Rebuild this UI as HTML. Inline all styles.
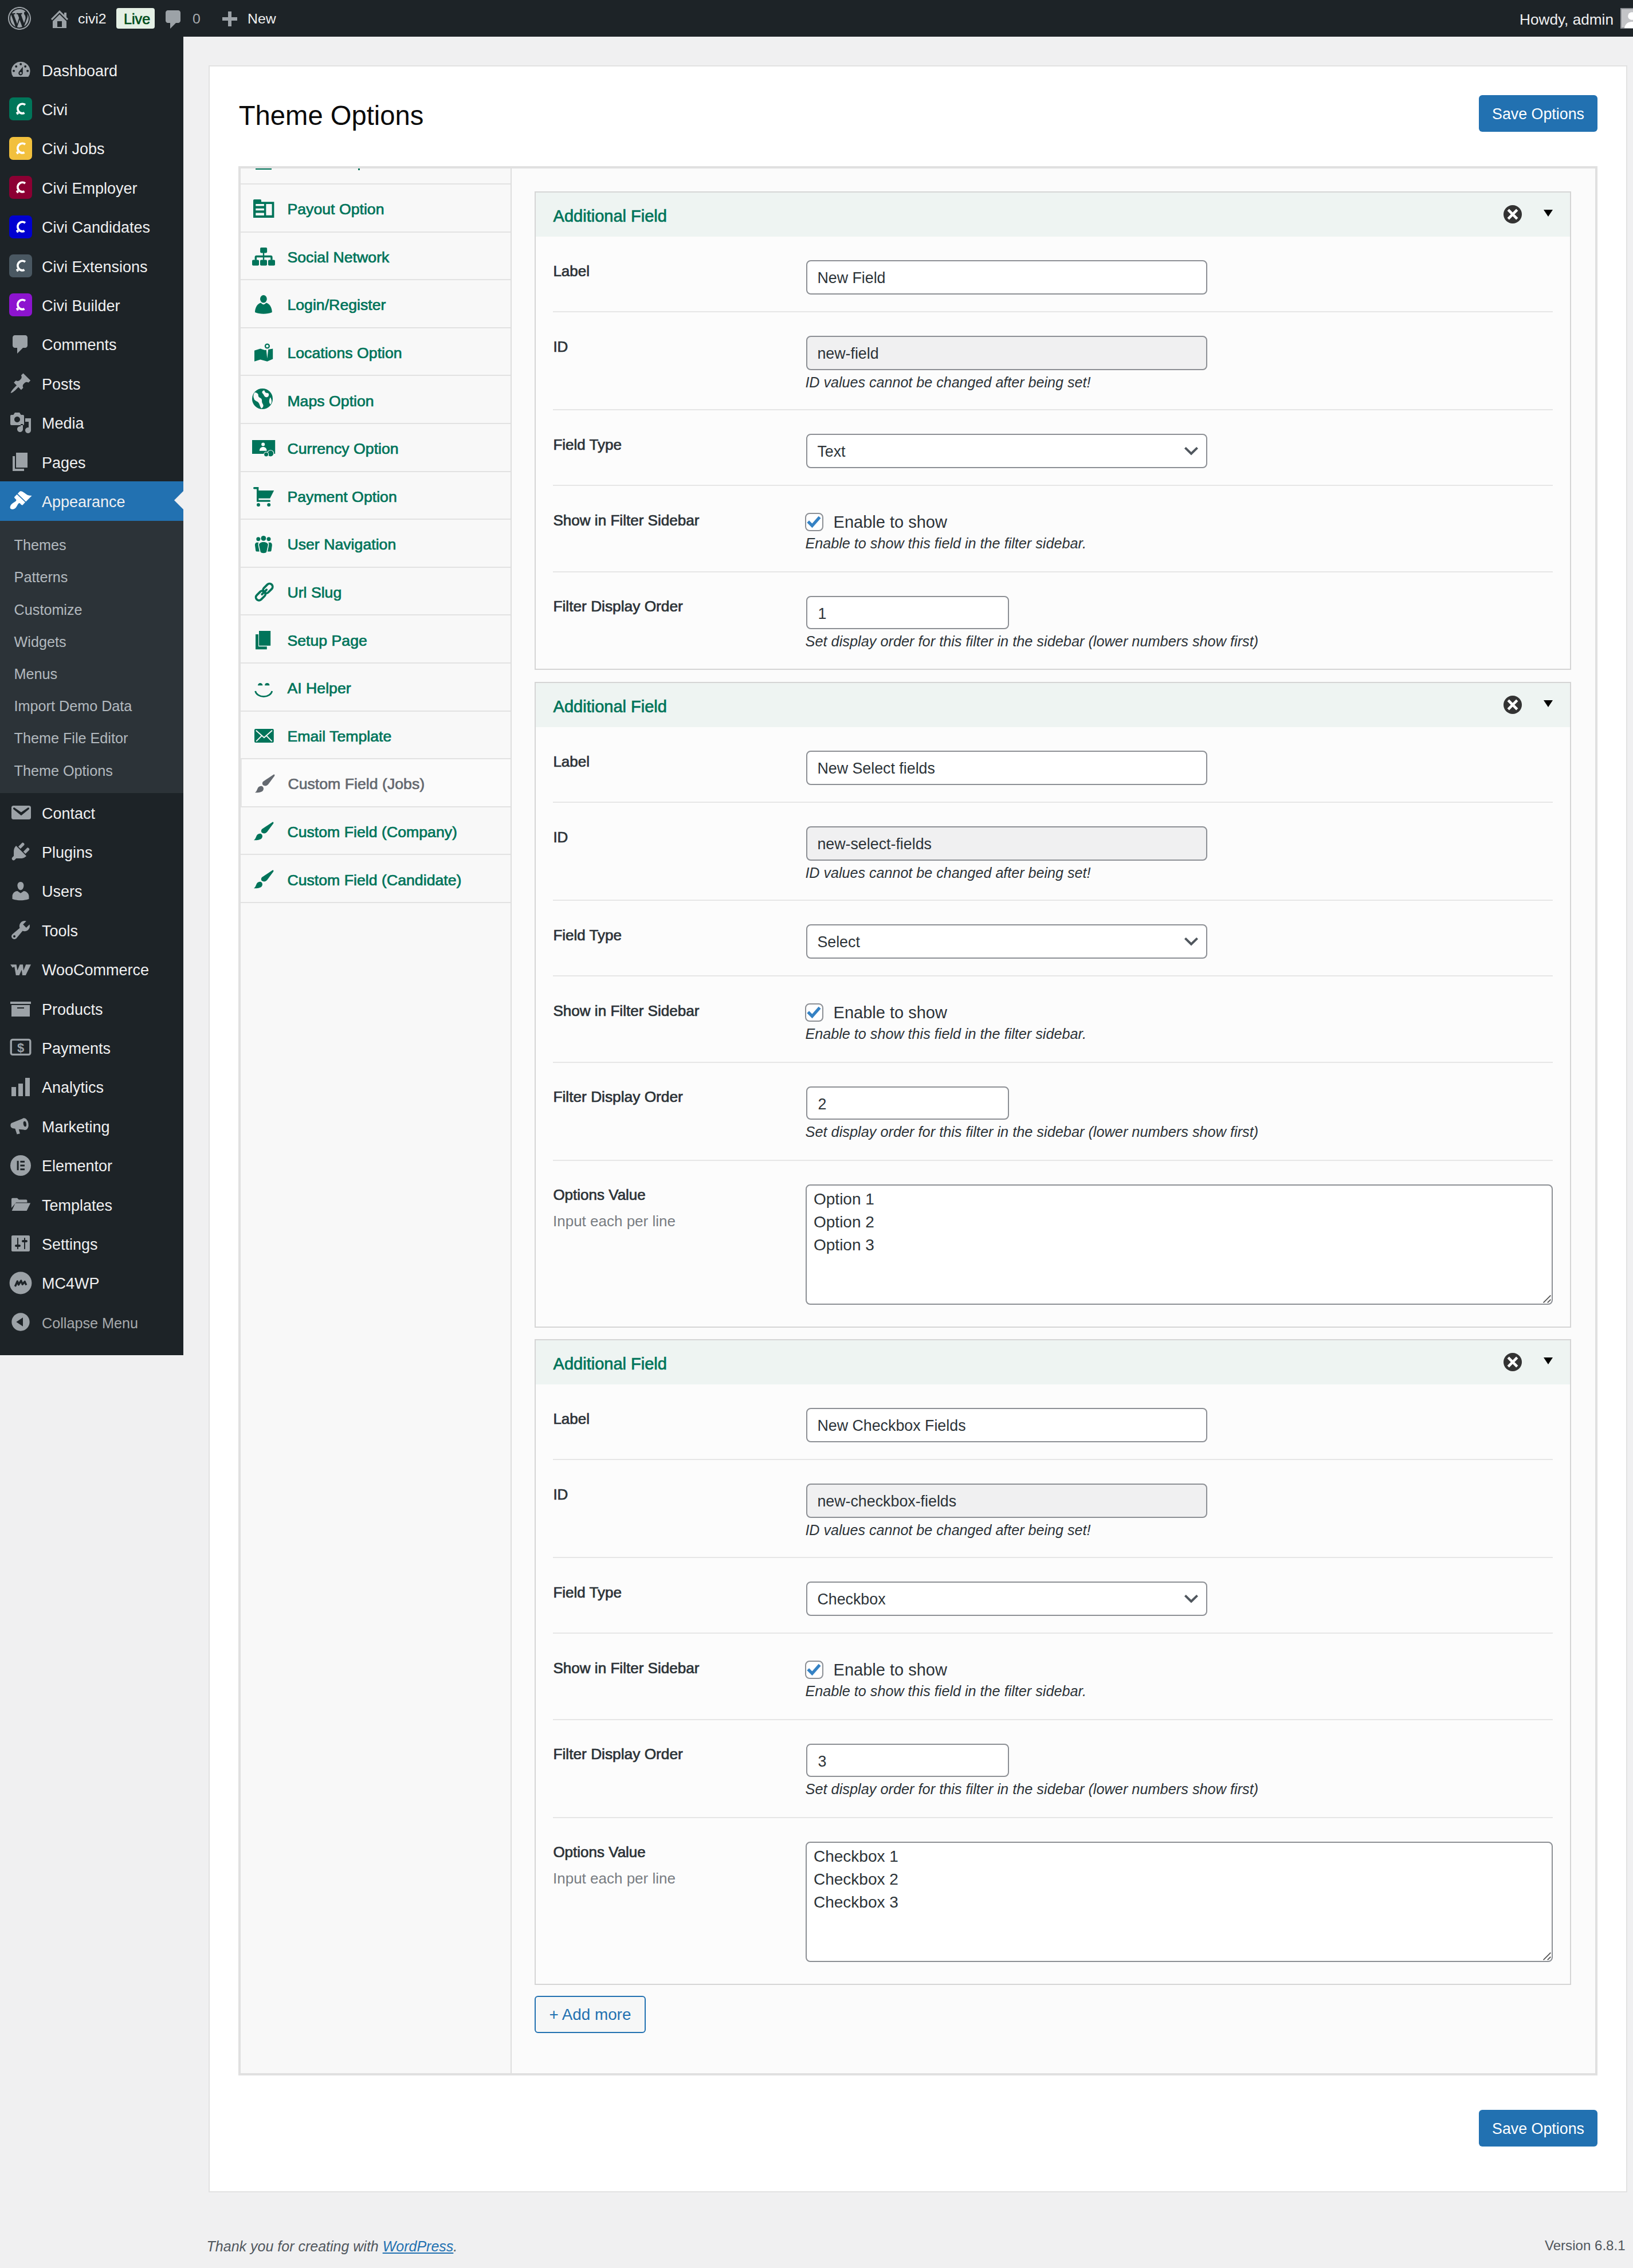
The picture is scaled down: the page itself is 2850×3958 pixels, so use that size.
<!DOCTYPE html>
<html><head><meta charset="utf-8"><style>
*{box-sizing:border-box}
html,body{margin:0;padding:0}
body{width:2850px;height:3958px;overflow:hidden;background:#f0f0f1;font-family:"Liberation Sans",sans-serif}
#pg{zoom:2;position:relative;width:1425px;height:1979px;overflow:hidden;background:#f0f0f1}
.ab{position:absolute}
.tx{position:absolute;white-space:nowrap}
#am{position:absolute;left:0;top:32px;width:160px;height:1150.6px}
#am .mi{position:absolute;left:0;width:160px;height:34.2px}
#am .mi .nm{position:absolute;left:36.5px;top:.8px;line-height:34.2px;font-size:13.5px;color:#f0f0f1;white-space:nowrap}
#am .mi.col .nm{color:#a7aaad;font-size:12.6px}
#am .mi svg{position:absolute;left:8px;top:7px;width:20px;height:20px}
#am .sub{position:absolute;left:0;top:422.4px;width:160px;height:237.6px;background:#2c3338}
#am .sub div{position:absolute;left:12.3px;font-size:12.6px;line-height:28px;color:rgba(240,246,252,.7);white-space:nowrap}
#am .arr{position:absolute;right:0;top:8.5px;width:0;height:0;border:8px solid transparent;border-right-color:#f0f0f1}
</style></head><body><div id="pg">
<div class="ab" style="left:0.00px;top:0.00px;width:1425.00px;height:32.00px;background:#1d2327"></div>
<svg class="ab" style="left:7px;top:6px;width:20px;height:20px" viewBox="0 0 20 20"><path d="M20 10c0-5.52-4.48-10-10-10S0 4.48 0 10s4.48 10 10 10 10-4.48 10-10zM10 1.01c4.97 0 8.99 4.02 8.99 8.99s-4.02 8.99-8.99 8.99S1.01 14.97 1.01 10 5.03 1.01 10 1.01zM8.01 14.82L4.96 6.61c.49-.03 1.05-.08 1.05-.08.43-.05.38-1.01-.06-.99 0 0-1.29.1-2.13.1-.15 0-.33 0-.52-.01 1.44-2.17 3.9-3.6 6.7-3.6 2.09 0 3.99.79 5.41 2.09-.6-.08-1.45.35-1.45 1.42 0 .66.38 1.22.79 1.88.31.54.5 1.22.5 2.21 0 1.34-1.27 4.48-1.27 4.48l-2.71-7.5c.48-.03.75-.16.75-.16.43-.05.38-1.1-.05-1.08 0 0-1.3.11-2.14.11-.78 0-2.11-.11-2.11-.11-.43-.02-.48 1.06-.05 1.08l.84.08 1.12 3.04zm6.02 2.15L16.64 10s.67-1.69.39-3.81c.63 1.14.94 2.42.94 3.81 0 2.96-1.56 5.58-3.94 6.97zM2.68 6.77L6.5 17.25c-2.67-1.3-4.47-4.08-4.47-7.25 0-1.16.2-2.23.65-3.23zm7.45 4.53l2.29 6.25c-.75.27-1.57.42-2.42.42-.72 0-1.41-.11-2.06-.32z" fill="#9ca2a7"/></svg>
<svg class="ab" style="left:42px;top:6.5px;width:20px;height:20px" viewBox="0 0 20 20"><path d="M16 8.5l1.53 1.53-1.06 1.06L10 4.62l-6.47 6.47-1.06-1.06L10 2.5l4 4v-2h2v4zm-6-2.46l6 5.99V18H4v-5.97zM12 17v-5H8v5h4z" fill="#9ca2a7"/></svg>
<div class="tx" style="left:68.00px;top:8.70px;font-size:12.4px;line-height:16px;color:#f0f0f1;font-weight:400;font-style:normal;">civi2</div>
<div class="ab" style="left:101.50px;top:7.00px;width:33.50px;height:18.00px;background:#e5f0e5;border-radius:2px"></div>
<div class="tx" style="left:108.00px;top:8.63px;font-size:12.6px;line-height:16px;color:#004d1a;font-weight:400;font-style:normal;-webkit-text-stroke:0.36px #004d1a;">Live</div>
<svg class="ab" style="left:141.7px;top:7px;width:20px;height:20px" viewBox="0 0 20 20"><path d="M5 2h9c1.1 0 2 .9 2 2v7c0 1.1-.9 2-2 2h-2l-5 5v-5H5c-1.1 0-2-.9-2-2V4c0-1.1.9-2 2-2z" fill="#9ca2a7"/></svg>
<div class="tx" style="left:168.00px;top:8.70px;font-size:12.4px;line-height:16px;color:#a7aaad;font-weight:400;font-style:normal;">0</div>
<svg class="ab" style="left:190px;top:8px;width:20px;height:20px" viewBox="0 0 20 20"><path d="M17 7v3h-5v5H9v-5H4V7h5V2h3v5h5z" fill="#9ca2a7"/></svg>
<div class="tx" style="left:216.00px;top:8.70px;font-size:12.4px;line-height:16px;color:#f0f0f1;font-weight:400;font-style:normal;">New</div>
<div class="tx" style="left:1326.00px;top:8.36px;font-size:13.1px;line-height:17px;color:#f0f0f1;font-weight:400;font-style:normal;">Howdy, admin</div>
<svg class="ab" style="left:1414px;top:7px;width:18px;height:18px" viewBox="0 0 18 18"><rect x=".5" y=".5" width="17" height="17" fill="#c3c4c7" stroke="#8c8f94"/><circle cx="10" cy="7" r="3.4" fill="#fff"/><path d="M3.5 17.5c.6-3.6 3.2-5.5 6.5-5.5s5.9 1.9 6.5 5.5z" fill="#fff"/></svg>
<div class="ab" style="left:0.00px;top:32.00px;width:160.00px;height:1150.60px;background:#1d2327"></div>
<div id="am"><div class="mi" style="top:12.0px"><svg viewBox="0 0 20 20"><path d="M3.5 16A8.2 8.2 0 1 1 16.7 16Z" fill="#9ca2a7"/><circle cx="10.1" cy="5" r="1" fill="#1d2327"/><circle cx="6.1" cy="7" r="1" fill="#1d2327"/><circle cx="14.1" cy="7" r="1" fill="#1d2327"/><circle cx="4" cy="10.9" r="1" fill="#1d2327"/><circle cx="16.1" cy="10.9" r="1" fill="#1d2327"/><path d="M11.9 7.2V12.9A1.9 1.9 0 1 1 8.4 11.8Z" fill="#1d2327"/><circle cx="10.1" cy="12.8" r=".9" fill="#9ca2a7"/></svg><div class="nm">Dashboard</div></div>
<div class="mi" style="top:46.2px"><svg viewBox="0 0 20 20"><rect x="0" y="0" width="20" height="20" rx="3.5" fill="#00765a"/><path d="M14 6.5A4.1 4.1 0 1 0 13.3 13.5" stroke="#fff" stroke-width="1.95" fill="none"/><path d="M5.9 13.2L7.3 12.4 8.6 14.3 7 15.2Z" fill="#fff"/></svg><div class="nm">Civi</div></div>
<div class="mi" style="top:80.4px"><svg viewBox="0 0 20 20"><rect x="0" y="0" width="20" height="20" rx="3.5" fill="#f2c03d"/><path d="M14 6.5A4.1 4.1 0 1 0 13.3 13.5" stroke="#fff" stroke-width="1.95" fill="none"/><path d="M5.9 13.2L7.3 12.4 8.6 14.3 7 15.2Z" fill="#fff"/></svg><div class="nm">Civi Jobs</div></div>
<div class="mi" style="top:114.6px"><svg viewBox="0 0 20 20"><rect x="0" y="0" width="20" height="20" rx="3.5" fill="#8c0033"/><path d="M14 6.5A4.1 4.1 0 1 0 13.3 13.5" stroke="#fff" stroke-width="1.95" fill="none"/><path d="M5.9 13.2L7.3 12.4 8.6 14.3 7 15.2Z" fill="#fff"/></svg><div class="nm">Civi Employer</div></div>
<div class="mi" style="top:148.8px"><svg viewBox="0 0 20 20"><rect x="0" y="0" width="20" height="20" rx="3.5" fill="#0000d0"/><path d="M14 6.5A4.1 4.1 0 1 0 13.3 13.5" stroke="#fff" stroke-width="1.95" fill="none"/><path d="M5.9 13.2L7.3 12.4 8.6 14.3 7 15.2Z" fill="#fff"/></svg><div class="nm">Civi Candidates</div></div>
<div class="mi" style="top:183.0px"><svg viewBox="0 0 20 20"><rect x="0" y="0" width="20" height="20" rx="3.5" fill="#4a5862"/><path d="M14 6.5A4.1 4.1 0 1 0 13.3 13.5" stroke="#fff" stroke-width="1.95" fill="none"/><path d="M5.9 13.2L7.3 12.4 8.6 14.3 7 15.2Z" fill="#fff"/></svg><div class="nm">Civi Extensions</div></div>
<div class="mi" style="top:217.2px"><svg viewBox="0 0 20 20"><rect x="0" y="0" width="20" height="20" rx="3.5" fill="#8d14cf"/><path d="M14 6.5A4.1 4.1 0 1 0 13.3 13.5" stroke="#fff" stroke-width="1.95" fill="none"/><path d="M5.9 13.2L7.3 12.4 8.6 14.3 7 15.2Z" fill="#fff"/></svg><div class="nm">Civi Builder</div></div>
<div class="mi" style="top:251.4px"><svg viewBox="0 0 20 20"><path d="M5 2h9c1.1 0 2 .9 2 2v7c0 1.1-.9 2-2 2h-2l-5 5v-5H5c-1.1 0-2-.9-2-2V4c0-1.1.9-2 2-2z" fill="#9ca2a7"/></svg><div class="nm">Comments</div></div>
<div class="mi" style="top:285.6px"><svg viewBox="0 0 20 20"><path d="M10.44 3.02l1.82-1.82 6.36 6.35-1.83 1.82c-1.05-.68-2.48-.57-3.41.36l-.75.75c-.92.93-1.04 2.35-.35 3.41l-1.83 1.82-2.41-2.41-2.8 2.79c-.42.42-3.38 2.71-3.8 2.29s1.86-3.39 2.28-3.81l2.79-2.79L4.1 9.36l1.83-1.82c1.05.69 2.48.57 3.4-.36l.75-.75c.93-.92 1.05-2.35.36-3.41z" fill="#9ca2a7"/></svg><div class="nm">Posts</div></div>
<div class="mi" style="top:319.8px"><svg viewBox="0 0 20 20"><path d="M13 11V4c0-.55-.45-1-1-1h-1.67L9 1H5L3.67 3H2c-.55 0-1 .45-1 1v7c0 .55.45 1 1 1h10c.55 0 1-.45 1-1zM7 4.5c1.38 0 2.5 1.12 2.5 2.5S8.38 9.5 7 9.5 4.5 8.38 4.5 7 5.62 4.5 7 4.5zM14 6h5v10.5c0 1.38-1.12 2.5-2.5 2.5S14 17.88 14 16.5s1.12-2.5 2.5-2.5c.17 0 .34.02.5.05V9h-3V6zm-4 8.05V11h2v4.5c0 1.38-1.12 2.5-2.5 2.5S7 16.88 7 15.5 8.12 13 9.5 13c.17 0 .34.02.5.05z" fill="#9ca2a7"/></svg><div class="nm">Media</div></div>
<div class="mi" style="top:354.0px"><svg viewBox="0 0 20 20"><path d="M6 15V2h10v13H6zm-1 1h8v2H3V5h2v11z" fill="#9ca2a7"/></svg><div class="nm">Pages</div></div>
<div class="mi" style="top:388.2px;background:#2271b1"><svg viewBox="0 0 20 20"><path d="M7.4 3.7L9.2 1.9C10 1.5 11 1.7 11.6 2C12.5 2.5 13.2 3.1 13.9 3.5C14.8 4.1 15.6 4.8 16.2 5C17.4 5.4 18.6 5.5 19.8 5.45L14.6 10.7Z" fill="#fff"/><path d="M6.8 4.4L4.7 6.5C4.4 6.9 4.5 7.3 4.8 7.6L6.2 9.1C6.2 9.7 6 10 5.7 10.4C5 10.9 4.2 11.3 3.4 11.9C2.3 12.7 1.3 13.6 1 14.7C.7 15.6 .8 16.5 1.3 16.9C1.8 17.4 2.4 17.5 3.1 17.4C4.1 17.2 4.9 16.8 5.6 16.2C6.7 15.1 7.3 13.4 8 12.5C8.4 12 8.8 11.9 9.1 12C9.6 12.2 10 12.9 10.5 13.4C10.9 13.7 11.3 13.8 11.7 13.7L14 11.3Z" fill="#fff"/></svg><div class="nm">Appearance</div><div class="arr"></div></div>
<div class="sub"><div style="top:7.2px">Themes</div><div style="top:35.3px">Patterns</div><div style="top:63.4px">Customize</div><div style="top:91.5px">Widgets</div><div style="top:119.6px">Menus</div><div style="top:147.7px">Import Demo Data</div><div style="top:175.8px">Theme File Editor</div><div style="top:203.9px">Theme Options</div></div>
<div class="mi" style="top:660.0px"><svg viewBox="0 0 20 20"><path d="M3.87 4h13.25C18.37 4 19 4.59 19 5.79v8.42c0 1.19-.63 1.79-1.88 1.79H3.87c-1.25 0-1.88-.6-1.88-1.79V5.79c0-1.2.63-1.79 1.88-1.79zm6.62 8.6l6.74-5.53c.24-.2.43-.66.13-1.07-.29-.41-.82-.42-1.17-.17l-5.7 3.86L4.8 5.83c-.35-.25-.88-.24-1.17.17-.3.41-.11.87.13 1.07z" fill="#9ca2a7"/></svg><div class="nm">Contact</div></div>
<div class="mi" style="top:694.2px"><svg viewBox="0 0 20 20"><path d="M13.11 4.36L9.87 7.6 8 5.73l3.24-3.24c.35-.34 1.05-.2 1.56.32.52.51.66 1.21.31 1.55zm-8 1.77l.91-1.12 9.01 9.01-1.19.84c-.71.71-2.63 1.16-3.82 1.16H6.14L4.9 17.26c-.59.59-1.54.59-2.12 0-.59-.58-.59-1.53 0-2.12l1.24-1.24v-3.88c0-1.13.4-3.19 1.09-3.89zm7.26 3.97l3.24-3.24c.34-.35 1.04-.21 1.55.31.52.51.66 1.21.31 1.55l-3.24 3.25z" fill="#9ca2a7"/></svg><div class="nm">Plugins</div></div>
<div class="mi" style="top:728.4px"><svg viewBox="0 0 20 20"><path d="M10 9.25c-2.27 0-2.73-3.44-2.73-3.44C7 4.02 7.82 2 9.97 2c2.16 0 2.98 2.02 2.71 3.81 0 0-.41 3.44-2.68 3.44zm0 2.57L12.72 10c2.39 0 4.52 2.33 4.52 4.53v2.49s-3.65 1.13-7.24 1.13c-3.65 0-7.24-1.13-7.24-1.13v-2.49c0-2.25 1.94-4.48 4.47-4.48z" fill="#9ca2a7"/></svg><div class="nm">Users</div></div>
<div class="mi" style="top:762.6px"><svg viewBox="0 0 20 20"><path d="M16.68 9.77c-1.34 1.34-3.3 1.67-4.95.99l-5.41 6.52c-.99.99-2.59.99-3.58 0s-.99-2.59 0-3.57l6.52-5.42c-.68-1.65-.35-3.61.99-4.95 1.28-1.28 3.12-1.62 4.72-1.06l-2.89 2.89 2.82 2.82 2.86-2.87c.53 1.58.18 3.39-1.08 4.65zM3.81 16.21c.4.39 1.04.39 1.43 0 .4-.4.4-1.04 0-1.43-.39-.4-1.03-.4-1.43 0-.39.39-.39 1.03 0 1.43z" fill="#9ca2a7"/></svg><div class="nm">Tools</div></div>
<div class="mi" style="top:796.8px"><svg viewBox="0 0 20 20"><path d="M1 5.6h5.3l.9 5.2 2.1-5.2h2.7l.5 5.3 2.1-5.3H19l-4.6 9.4h-2.9l-.6-4.7-2.1 4.7H5.9L4.6 7.5 3 8.4z" fill="#9ca2a7"/></svg><div class="nm">WooCommerce</div></div>
<div class="mi" style="top:831.0px"><svg viewBox="0 0 20 20"><path d="M19 4v2H1V4h18zM2 7h16v10H2V7zm11 3V9H7v1h6z" fill="#9ca2a7"/></svg><div class="nm">Products</div></div>
<div class="mi" style="top:865.2px"><svg viewBox="0 0 20 20"><rect x="1.6" y="3.2" width="16.8" height="13" rx="1.5" fill="none" stroke="#9ca2a7" stroke-width="1.7"/><text x="10" y="13.9" font-family="Liberation Sans" font-weight="700" font-size="11" text-anchor="middle" fill="#9ca2a7">$</text></svg><div class="nm">Payments</div></div>
<div class="mi" style="top:899.4px"><svg viewBox="0 0 20 20"><path d="M18 18V2h-4v16h4zm-6 0V7H8v11h4zm-6 0v-8H2v8h4z" fill="#9ca2a7"/></svg><div class="nm">Analytics</div></div>
<div class="mi" style="top:933.6px"><svg viewBox="0 0 20 20"><path d="M1.2 9.2C1.2 8.3 1.7 7.6 2.5 7.3L12.6 3.2 14.3 13.4 8.4 12.9 9.4 16.6 6.8 17.3 5.2 12.4 3 12C1.9 11.7 1.2 10.8 1.2 9.9Z" fill="#9ca2a7"/><ellipse cx="13.5" cy="8.3" rx="3.3" ry="5.2" transform="rotate(-10 13.5 8.3)" fill="#9ca2a7"/><ellipse cx="13.7" cy="8.2" rx="1.3" ry="2.4" transform="rotate(-10 13.7 8.2)" fill="#1d2327"/></svg><div class="nm">Marketing</div></div>
<div class="mi" style="top:967.8px"><svg viewBox="0 0 20 20"><circle cx="10" cy="10" r="9" fill="#9ca2a7"/><rect x="6.8" y="5.9" width="1.5" height="8.2" fill="#1d2327"/><rect x="9.7" y="5.9" width="3.8" height="1.5" fill="#1d2327"/><rect x="9.7" y="9.25" width="3.8" height="1.5" fill="#1d2327"/><rect x="9.7" y="12.6" width="3.8" height="1.5" fill="#1d2327"/></svg><div class="nm">Elementor</div></div>
<div class="mi" style="top:1002.0px"><svg viewBox="0 0 20 20"><path d="M2 5.4c0-.6.4-1 1-1h4l1.4 1.4h6.4c.5 0 .9.4.9.9v1.5H6L2 13z" fill="#9ca2a7"/><path d="M5.4 8.8h13.2l-3.3 6.7H2.3z" fill="#9ca2a7"/></svg><div class="nm">Templates</div></div>
<div class="mi" style="top:1036.2px"><svg viewBox="0 0 20 20"><path d="M18 16V4c0-.55-.45-1-1-1H3c-.55 0-1 .45-1 1v12c0 .55.45 1 1 1h14c.55 0 1-.45 1-1zM8 11h1c.55 0 1 .45 1 1s-.45 1-1 1H8v1.5c0 .28-.22.5-.5.5s-.5-.22-.5-.5V13H6c-.55 0-1-.45-1-1s.45-1 1-1h1V5.5c0-.28.22-.5.5-.5s.5.22.5.5V11zm5-2h-1c-.55 0-1-.45-1-1s.45-1 1-1h1V5.5c0-.28.22-.5.5-.5s.5.22.5.5V7h1c.55 0 1 .45 1 1s-.45 1-1 1h-1v5.5c0 .28-.22.5-.5.5s-.5-.22-.5-.5V9z" fill="#9ca2a7"/></svg><div class="nm">Settings</div></div>
<div class="mi" style="top:1070.4px"><svg viewBox="0 0 20 20"><circle cx="10" cy="10" r="9.7" fill="#9ca2a7"/><path d="M5.2 13l2-4.5 1 3 2.2-3.5 1.2 3.2 2-2.4 1.3 3" stroke="#1d2327" stroke-width="1.7" fill="none" stroke-linejoin="round"/></svg><div class="nm">MC4WP</div></div>
<div class="mi col" style="top:1104.6px"><svg viewBox="0 0 20 20"><path d="M10 2.16c4.33 0 7.84 3.51 7.84 7.84s-3.51 7.84-7.84 7.84S2.16 14.33 2.16 10 5.71 2.16 10 2.16zm2 11.72V6.12L6.18 9.97z" fill="#9ca2a7"/></svg><div class="nm">Collapse Menu</div></div></div>
<div class="ab" style="left:182.00px;top:57.00px;width:1238.00px;height:1856.00px;background:#fff;border:1px solid #e2e2e2"></div>
<div class="tx" style="left:208.40px;top:85.82px;font-size:23.6px;line-height:30px;color:#0a0a0a;font-weight:400;font-style:normal;">Theme Options</div>
<div class="ab" style="left:1290.50px;top:83.00px;width:103.50px;height:32.00px;background:#2271b1;border-radius:3px"></div><div class="tx" style="left:1290.5px;top:83px;width:103.5px;text-align:center;font-size:13.4px;line-height:33.6px;color:#fff">Save Options</div>
<div class="ab" style="left:1290.50px;top:1841.00px;width:103.50px;height:32.00px;background:#2271b1;border-radius:3px"></div><div class="tx" style="left:1290.5px;top:1841px;width:103.5px;text-align:center;font-size:13.4px;line-height:33.6px;color:#fff">Save Options</div>
<div class="ab" style="left:208.00px;top:145.00px;width:1186.00px;height:1666.00px;border:2px solid #e0e0e0;background:#fbfbfb"></div>
<div class="ab" style="left:210.00px;top:147.00px;width:236.50px;height:1662.00px;background:#f8f8f8;border-right:1px solid #dedede"></div>
<div class="ab" style="left:223.00px;top:147.00px;width:14.00px;height:1.00px;background:#00745a"></div>
<div class="ab" style="left:312.50px;top:147.00px;width:1.50px;height:1.50px;background:#00745a"></div>
<div class="ab" style="left:210.00px;top:160.00px;width:235.50px;height:1.00px;background:#e2e2e2"></div>
<div class="ab" style="left:210.00px;top:201.80px;width:235.50px;height:1.00px;background:#e2e2e2"></div>
<div class="ab" style="left:210.00px;top:243.60px;width:235.50px;height:1.00px;background:#e2e2e2"></div>
<div class="ab" style="left:210.00px;top:285.40px;width:235.50px;height:1.00px;background:#e2e2e2"></div>
<div class="ab" style="left:210.00px;top:327.20px;width:235.50px;height:1.00px;background:#e2e2e2"></div>
<div class="ab" style="left:210.00px;top:369.00px;width:235.50px;height:1.00px;background:#e2e2e2"></div>
<div class="ab" style="left:210.00px;top:410.80px;width:235.50px;height:1.00px;background:#e2e2e2"></div>
<div class="ab" style="left:210.00px;top:452.60px;width:235.50px;height:1.00px;background:#e2e2e2"></div>
<div class="ab" style="left:210.00px;top:494.40px;width:235.50px;height:1.00px;background:#e2e2e2"></div>
<div class="ab" style="left:210.00px;top:536.20px;width:235.50px;height:1.00px;background:#e2e2e2"></div>
<div class="ab" style="left:210.00px;top:578.00px;width:235.50px;height:1.00px;background:#e2e2e2"></div>
<div class="ab" style="left:210.00px;top:619.80px;width:235.50px;height:1.00px;background:#e2e2e2"></div>
<div class="ab" style="left:210.00px;top:661.60px;width:235.50px;height:1.00px;background:#e2e2e2"></div>
<div class="ab" style="left:210.00px;top:703.40px;width:235.50px;height:1.00px;background:#e2e2e2"></div>
<div class="ab" style="left:210.00px;top:745.20px;width:235.50px;height:1.00px;background:#e2e2e2"></div>
<div class="ab" style="left:210.00px;top:787.00px;width:235.50px;height:1.00px;background:#e2e2e2"></div>
<svg class="ab" style="left:220.85px;top:173.85px;width:18.2px;height:16.05px;overflow:visible" viewBox="0 0 18.2 16.05"><path d="M0 .9Q0 0 .9 0H6.2Q7 0 7 .8V2.15H18.2V16.05H0Z" fill="#00745a"/><path d="M2.15 4.04h7.3v1.7h-7.3zM2.15 7.9h7.3v1.7h-7.3zM2.15 11.8h7.3v2.15h-7.3zM11.2 4.04h5.1v9.9h-5.1z" fill="#f8f8f8"/></svg>
<div class="tx" style="left:250.70px;top:174.07px;font-size:13.35px;line-height:17px;color:#00745a;font-weight:400;font-style:normal;-webkit-text-stroke:0.36px #00745a;">Payout Option</div>
<svg class="ab" style="left:220px;top:216.20px;width:20px;height:15.7px;overflow:visible" viewBox="0 0 20 15.7"><rect x="7.05" y="0" width="6" height="4.7" rx=".9" fill="#00745a"/><path d="M9.4 4.5h1.2v2.4h5.6a1.6 1.6 0 0 1 1.6 1.6v2.4h-1.7V8.6H10.6v2.3H9.4V8.6H4V10.9H2.3V8.5a1.6 1.6 0 0 1 1.6-1.6h5.5z" fill="#00745a"/><rect x="0" y="10.7" width="6" height="5" rx="1" fill="#00745a"/><rect x="7" y="10.7" width="6" height="5" rx="1" fill="#00745a"/><rect x="14" y="10.7" width="6" height="5" rx="1" fill="#00745a"/></svg>
<div class="tx" style="left:250.70px;top:215.87px;font-size:13.35px;line-height:17px;color:#00745a;font-weight:400;font-style:normal;-webkit-text-stroke:0.36px #00745a;">Social Network</div>
<svg class="ab" style="left:222.6px;top:257.40px;width:14.9px;height:16.4px;overflow:visible" viewBox="0 0 14.9 16.4"><ellipse cx="7.45" cy="3.35" rx="2.95" ry="3.35" fill="#00745a"/><path d="M0 15C0 10.8 2.4 7.2 5.3 6.8C5.9 7.7 6.6 8.2 7.45 8.2C8.3 8.2 9 7.7 9.6 6.8C12.5 7.2 14.9 10.8 14.9 15C12.7 15.9 10.1 16.4 7.45 16.4C4.8 16.4 2.2 15.9 0 15Z" fill="#00745a"/></svg>
<div class="tx" style="left:250.70px;top:257.67px;font-size:13.35px;line-height:17px;color:#00745a;font-weight:400;font-style:normal;-webkit-text-stroke:0.36px #00745a;">Login/Register</div>
<svg class="ab" style="left:221.9px;top:299.60px;width:16.1px;height:15.9px;overflow:visible" viewBox="0 0 16.1 15.9"><path d="M0 6.4L5.2 4.7 9 6 16.1 4.7V13.7L11.2 15.9 5.2 14.2 0 15.9Z" fill="#00745a"/><path d="M10.3 5.2h1.8L11.2 13.2Z" fill="#f8f8f8"/><circle cx="11.2" cy="2.5" r="2.3" fill="#00745a"/><circle cx="11.2" cy="2.5" r="1.15" fill="#f8f8f8"/></svg>
<div class="tx" style="left:250.70px;top:299.47px;font-size:13.35px;line-height:17px;color:#00745a;font-weight:400;font-style:normal;-webkit-text-stroke:0.36px #00745a;">Locations Option</div>
<svg class="ab" style="left:220px;top:339.20px;width:18px;height:18px;overflow:visible" viewBox="0 0 18 18"><circle cx="9" cy="9" r="9" fill="#00745a"/><path d="M2.3 3.4C3.3 3.5 4.4 3.9 5 4.6 5.6 5.3 5.2 6.2 5.6 7 6.1 8 7.6 8.2 8.2 9.1 8.8 10 8.4 11.2 8.7 12.2 9 13.2 9.9 14 9.8 15.1 9.7 16 9 16.8 8.3 17.4 6.7 16.1 6.8 14 5.7 12.5 4.8 11.2 2.9 11.1 2 9.8 1.6 9.2 1.7 8.5 1.3 8 .9 6.3 1.3 4.7 2.3 3.4ZM10.6 1.6C11 2.3 11.2 3.2 11.9 3.6 12.6 4 13.6 3.7 14.2 4.3 14.8 4.9 14.7 5.9 14.3 6.6 13.6 7.6 12.4 7.9 11.5 7.4 10.6 6.9 10.3 5.7 9.7 4.9 9.3 4.3 8.6 3.8 8.7 3.1 8.8 2.2 9.7 1.7 10.6 1.6ZM15.9 7.6C16.6 8.8 17.1 10.2 17 11.6 16.9 12.4 16.5 13.2 16.1 13.9 15.4 13.4 15 12.5 14.9 11.6 14.8 10.2 15.3 8.8 15.9 7.6Z" fill="#f8f8f8"/></svg>
<div class="tx" style="left:250.70px;top:341.27px;font-size:13.35px;line-height:17px;color:#00745a;font-weight:400;font-style:normal;-webkit-text-stroke:0.36px #00745a;">Maps Option</div>
<svg class="ab" style="left:220px;top:383.90px;width:20.1px;height:14.7px;overflow:visible" viewBox="0 0 20.1 14.7"><rect x="0" y="0" width="20.1" height="12" fill="#00745a"/><circle cx="9.6" cy="3.8" r="1.5" fill="#fff"/><path d="M6.4 9.4C6.4 7.2 7.8 6 9.6 6S12.8 7.2 12.8 9.4Z" fill="#fff"/><circle cx="16.1" cy="11.7" r="2.8" fill="#00745a" stroke="#f8f8f8" stroke-width=".55"/><circle cx="12.3" cy="12.5" r="2" fill="#00745a" stroke="#f8f8f8" stroke-width=".55"/></svg>
<div class="tx" style="left:250.70px;top:383.07px;font-size:13.35px;line-height:17px;color:#00745a;font-weight:400;font-style:normal;-webkit-text-stroke:0.36px #00745a;">Currency Option</div>
<svg class="ab" style="left:221px;top:424.90px;width:18.1px;height:17px;overflow:visible" viewBox="0 0 18.1 17"><path d="M.85 0H4.7V3H18.1L14.6 9.9H4.7V11.3H14.2A.8.8 0 0 1 14.2 12.9H3V1.7H.85A.85.85 0 0 1 .85 0Z" fill="#00745a"/><circle cx="4.5" cy="15.5" r="1.5" fill="#00745a"/><circle cx="13.6" cy="15.5" r="1.5" fill="#00745a"/></svg>
<div class="tx" style="left:250.70px;top:424.87px;font-size:13.35px;line-height:17px;color:#00745a;font-weight:400;font-style:normal;-webkit-text-stroke:0.36px #00745a;">Payment Option</div>
<svg class="ab" style="left:222.6px;top:467.40px;width:14.9px;height:15.1px;overflow:visible" viewBox="0 0 14.9 15.1"><circle cx="7.45" cy="2.2" r="2.2" fill="#00745a"/><circle cx="2.9" cy="2.9" r="1.75" fill="#00745a"/><circle cx="12" cy="2.9" r="1.75" fill="#00745a"/><path d="M3.5 7.9C3.5 6.9 4.6 5.5 7.45 5.5S11.4 6.9 11.4 7.9L10.1 14C9.7 14.8 8.7 15.1 7.45 15.1S5.2 14.8 4.8 14Z" fill="#f8f8f8" stroke="#f8f8f8" stroke-width=".6"/><path d="M3.5 7.9C3.5 6.9 4.6 5.5 7.45 5.5S11.4 6.9 11.4 7.9L10.1 14C9.7 14.8 8.7 15.1 7.45 15.1S5.2 14.8 4.8 14Z" fill="#00745a"/><path d="M1.6 5.9H3.2C2.7 6.8 2.7 7.8 2.9 8.8L3.9 13.7H1.5C.9 13.7.7 13.2.6 12.7L0 8.4C-.1 7.1.5 5.9 1.6 5.9ZM13.3 5.9H11.7C12.2 6.8 12.2 7.8 12 8.8L11 13.7H13.4C14 13.7 14.2 13.2 14.3 12.7L14.9 8.4C15 7.1 14.4 5.9 13.3 5.9Z" fill="#00745a"/></svg>
<div class="tx" style="left:250.70px;top:466.67px;font-size:13.35px;line-height:17px;color:#00745a;font-weight:400;font-style:normal;-webkit-text-stroke:0.36px #00745a;">User Navigation</div>
<svg class="ab" style="left:221.9px;top:507.80px;width:17.2px;height:17.2px;overflow:visible" viewBox="0 0 17.2 17.2"><g transform="rotate(-45 8.6 8.6)" fill="none" stroke="#00745a" stroke-width="1.9"><rect x="-.6" y="5.9" width="9.6" height="5.4" rx="2.7"/><rect x="8.2" y="5.9" width="9.6" height="5.4" rx="2.7"/></g><path d="M6.6 10.6L10.6 6.6" stroke="#00745a" stroke-width="1.9" stroke-linecap="round"/></svg>
<div class="tx" style="left:250.70px;top:508.47px;font-size:13.35px;line-height:17px;color:#00745a;font-weight:400;font-style:normal;-webkit-text-stroke:0.36px #00745a;">Url Slug</div>
<svg class="ab" style="left:223px;top:550.40px;width:13.1px;height:16.1px;overflow:visible" viewBox="0 0 13.1 16.1"><rect x="3" y="0" width="10.1" height="12.9" fill="#00745a"/><path d="M0 3H2.5V13.6H9.9V16.1H0Z" fill="#00745a"/></svg>
<div class="tx" style="left:250.70px;top:550.27px;font-size:13.35px;line-height:17px;color:#00745a;font-weight:400;font-style:normal;-webkit-text-stroke:0.36px #00745a;">Setup Page</div>
<svg class="ab" style="left:221.9px;top:595.00px;width:16.2px;height:14.1px;overflow:visible" viewBox="0 0 16.2 14.1"><path d="M3 3.1A2.1 2.1 0 0 1 7.2 3.1ZM9.1 3.1A2.05 2.05 0 0 1 13.2 3.1Z" fill="#00745a"/><path d="M.8 8A7.4 5.8 0 0 0 15.4 8" fill="none" stroke="#00745a" stroke-width="1.35"/></svg>
<div class="tx" style="left:250.70px;top:592.07px;font-size:13.35px;line-height:17px;color:#00745a;font-weight:400;font-style:normal;-webkit-text-stroke:0.36px #00745a;">AI Helper</div>
<svg class="ab" style="left:222.1px;top:636.00px;width:16.9px;height:12px;overflow:visible" viewBox="0 0 16.9 12"><rect x="0" y="0" width="16.9" height="12" rx="1.1" fill="#00745a"/><path d="M1.4 1.4L8.45 7.6 15.5 1.4M1.6 10.8L6.2 6.2M15.3 10.8L10.7 6.2" stroke="#f8f8f8" stroke-width="1" fill="none"/></svg>
<div class="tx" style="left:250.70px;top:633.87px;font-size:13.35px;line-height:17px;color:#00745a;font-weight:400;font-style:normal;-webkit-text-stroke:0.36px #00745a;">Email Template</div>
<div class="ab" style="left:210.00px;top:662.60px;width:235.50px;height:40.80px;background:#fbfbfb;border-left:1px solid #e6e6e6"></div>
<svg class="ab" style="left:222.5px;top:675.30px;width:17.4px;height:16.4px;overflow:visible" viewBox="0 0 17.4 16.4"><path d="M16.4.3C17.2 0 17.4 1 17 1.6L11.6 8.9C10.6 10.2 8.6 10.6 7.3 9.8C6.2 9 6.1 7.4 7.2 6.4Z" fill="#646970"/><path d="M6.3 10.6C7.5 11.2 7.9 12.9 7 14.3C6 15.9 3 16.4 0 16.1C1.6 15.2 1.7 13.4 2.7 11.8C3.6 10.5 5.3 10.1 6.3 10.6Z" fill="#646970"/></svg>
<div class="tx" style="left:251.20px;top:675.67px;font-size:13.35px;line-height:17px;color:#646970;font-weight:400;font-style:normal;-webkit-text-stroke:0.36px #646970;">Custom Field (Jobs)</div>
<svg class="ab" style="left:221.6px;top:717.20px;width:17.4px;height:16.4px;overflow:visible" viewBox="0 0 17.4 16.4"><path d="M16.4.3C17.2 0 17.4 1 17 1.6L11.6 8.9C10.6 10.2 8.6 10.6 7.3 9.8C6.2 9 6.1 7.4 7.2 6.4Z" fill="#00745a"/><path d="M6.3 10.6C7.5 11.2 7.9 12.9 7 14.3C6 15.9 3 16.4 0 16.1C1.6 15.2 1.7 13.4 2.7 11.8C3.6 10.5 5.3 10.1 6.3 10.6Z" fill="#00745a"/></svg>
<div class="tx" style="left:250.70px;top:717.47px;font-size:13.35px;line-height:17px;color:#00745a;font-weight:400;font-style:normal;-webkit-text-stroke:0.36px #00745a;">Custom Field (Company)</div>
<svg class="ab" style="left:221.6px;top:759.00px;width:17.4px;height:16.4px;overflow:visible" viewBox="0 0 17.4 16.4"><path d="M16.4.3C17.2 0 17.4 1 17 1.6L11.6 8.9C10.6 10.2 8.6 10.6 7.3 9.8C6.2 9 6.1 7.4 7.2 6.4Z" fill="#00745a"/><path d="M6.3 10.6C7.5 11.2 7.9 12.9 7 14.3C6 15.9 3 16.4 0 16.1C1.6 15.2 1.7 13.4 2.7 11.8C3.6 10.5 5.3 10.1 6.3 10.6Z" fill="#00745a"/></svg>
<div class="tx" style="left:250.70px;top:759.27px;font-size:13.35px;line-height:17px;color:#00745a;font-weight:400;font-style:normal;-webkit-text-stroke:0.36px #00745a;">Custom Field (Candidate)</div>
<div class="ab" style="left:466.50px;top:167.00px;width:904.50px;height:417.50px;border:1px solid #d5d5d5;background:#fcfcfc"></div>
<div class="ab" style="left:467.50px;top:168.00px;width:902.50px;height:38.50px;background:#eef4f2"></div>
<div class="tx" style="left:482.80px;top:178.78px;font-size:14.5px;line-height:19px;color:#00745a;font-weight:400;font-style:normal;-webkit-text-stroke:0.36px #00745a;">Additional Field</div>
<svg class="ab" style="left:1312px;top:179.2px;width:16px;height:16px" viewBox="0 0 16 16"><circle cx="8" cy="8" r="8" fill="#333"/><path d="M4.1 4.1l7.8 7.8M11.9 4.1l-7.8 7.8" stroke="#fff" stroke-width="2.3"/></svg>
<svg class="ab" style="left:1347px;top:183.0px;width:8px;height:6px" viewBox="0 0 8 6"><path d="M0 0h8L4 6z" fill="#000"/></svg>
<div class="ab" style="left:482.50px;top:271.50px;width:872.50px;height:1.00px;background:#e6e6e6"></div>
<div class="ab" style="left:482.50px;top:357.00px;width:872.50px;height:1.00px;background:#e6e6e6"></div>
<div class="ab" style="left:482.50px;top:423.00px;width:872.50px;height:1.00px;background:#e6e6e6"></div>
<div class="ab" style="left:482.50px;top:498.50px;width:872.50px;height:1.00px;background:#e6e6e6"></div>
<div class="tx" style="left:482.70px;top:227.80px;font-size:13.0px;line-height:17px;color:#2c3338;font-weight:400;font-style:normal;-webkit-text-stroke:0.36px #2c3338;">Label</div>
<div class="ab" style="left:703.50px;top:226.80px;width:350.00px;height:30.00px;border:1px solid #8c8f94;border-radius:4px;background:#fff"></div><div class="tx" style="left:713.20px;top:233.96px;font-size:13.4px;line-height:17px;color:#2c3338;font-weight:400;font-style:normal;">New Field</div>
<div class="tx" style="left:482.70px;top:293.80px;font-size:13.0px;line-height:17px;color:#2c3338;font-weight:400;font-style:normal;-webkit-text-stroke:0.36px #2c3338;">ID</div>
<div class="ab" style="left:703.50px;top:292.80px;width:350.00px;height:30.00px;border:1px solid #8c8f94;border-radius:4px;background:#f0f0f1"></div><div class="tx" style="left:713.20px;top:299.96px;font-size:13.4px;line-height:17px;color:#2c3338;font-weight:400;font-style:normal;">new-field</div>
<div class="tx" style="left:702.70px;top:325.25px;font-size:12.55px;line-height:16px;color:#2c3338;font-weight:400;font-style:italic;">ID values cannot be changed after being set!</div>
<div class="tx" style="left:482.70px;top:379.30px;font-size:13.0px;line-height:17px;color:#2c3338;font-weight:400;font-style:normal;-webkit-text-stroke:0.36px #2c3338;">Field Type</div>
<div class="ab" style="left:703.50px;top:378.30px;width:350.00px;height:30.00px;border:1px solid #8c8f94;border-radius:4px;background:#fff"></div><div class="tx" style="left:713.20px;top:385.46px;font-size:13.4px;line-height:17px;color:#2c3338;font-weight:400;font-style:normal;">Text</div>
<svg class="ab" style="left:1033px;top:389.5px;width:13px;height:8px" viewBox="0 0 13 8"><path d="M1.2 1.2l5.3 5.2 5.3-5.2" stroke="#50575e" stroke-width="2" fill="none"/></svg>
<div class="tx" style="left:482.70px;top:445.28px;font-size:13.04px;line-height:17px;color:#2c3338;font-weight:400;font-style:normal;-webkit-text-stroke:0.36px #2c3338;">Show in Filter Sidebar</div>
<div class="ab" style="left:702.60px;top:447.60px;width:16.00px;height:16.00px;border:1px solid #8c8f94;border-radius:4px;background:#fff"></div>
<svg class="ab" style="left:702.6px;top:447.6px;width:16px;height:16px" viewBox="0 0 16 16"><path d="M2.6 7.6l3.6 3.6 6.6-7.4" stroke="#3582c4" stroke-width="2.6" fill="none"/></svg>
<div class="tx" style="left:727.30px;top:446.18px;font-size:14.5px;line-height:19px;color:#2c3338;font-weight:400;font-style:normal;">Enable to show</div>
<div class="tx" style="left:702.70px;top:466.23px;font-size:12.6px;line-height:16px;color:#2c3338;font-weight:400;font-style:italic;">Enable to show this field in the filter sidebar.</div>
<div class="tx" style="left:482.70px;top:520.74px;font-size:13.15px;line-height:17px;color:#2c3338;font-weight:400;font-style:normal;-webkit-text-stroke:0.36px #2c3338;">Filter Display Order</div>
<div class="ab" style="left:703.50px;top:519.90px;width:177.00px;height:29.20px;border:1px solid #8c8f94;border-radius:4px;background:#fff"></div>
<div class="tx" style="left:713.70px;top:526.86px;font-size:13.4px;line-height:17px;color:#2c3338;font-weight:400;font-style:normal;">1</div>
<div class="tx" style="left:702.80px;top:551.71px;font-size:12.66px;line-height:16px;color:#2c3338;font-weight:400;font-style:italic;">Set display order for this filter in the sidebar (lower numbers show first)</div>
<div class="ab" style="left:466.50px;top:595.00px;width:904.50px;height:563.30px;border:1px solid #d5d5d5;background:#fcfcfc"></div>
<div class="ab" style="left:467.50px;top:596.00px;width:902.50px;height:38.50px;background:#eef4f2"></div>
<div class="tx" style="left:482.80px;top:606.78px;font-size:14.5px;line-height:19px;color:#00745a;font-weight:400;font-style:normal;-webkit-text-stroke:0.36px #00745a;">Additional Field</div>
<svg class="ab" style="left:1312px;top:607.2px;width:16px;height:16px" viewBox="0 0 16 16"><circle cx="8" cy="8" r="8" fill="#333"/><path d="M4.1 4.1l7.8 7.8M11.9 4.1l-7.8 7.8" stroke="#fff" stroke-width="2.3"/></svg>
<svg class="ab" style="left:1347px;top:611.0px;width:8px;height:6px" viewBox="0 0 8 6"><path d="M0 0h8L4 6z" fill="#000"/></svg>
<div class="ab" style="left:482.50px;top:699.50px;width:872.50px;height:1.00px;background:#e6e6e6"></div>
<div class="ab" style="left:482.50px;top:785.00px;width:872.50px;height:1.00px;background:#e6e6e6"></div>
<div class="ab" style="left:482.50px;top:851.00px;width:872.50px;height:1.00px;background:#e6e6e6"></div>
<div class="ab" style="left:482.50px;top:926.50px;width:872.50px;height:1.00px;background:#e6e6e6"></div>
<div class="ab" style="left:482.50px;top:1012.00px;width:872.50px;height:1.00px;background:#e6e6e6"></div>
<div class="tx" style="left:482.70px;top:655.80px;font-size:13.0px;line-height:17px;color:#2c3338;font-weight:400;font-style:normal;-webkit-text-stroke:0.36px #2c3338;">Label</div>
<div class="ab" style="left:703.50px;top:654.80px;width:350.00px;height:30.00px;border:1px solid #8c8f94;border-radius:4px;background:#fff"></div><div class="tx" style="left:713.20px;top:661.96px;font-size:13.4px;line-height:17px;color:#2c3338;font-weight:400;font-style:normal;">New Select fields</div>
<div class="tx" style="left:482.70px;top:721.80px;font-size:13.0px;line-height:17px;color:#2c3338;font-weight:400;font-style:normal;-webkit-text-stroke:0.36px #2c3338;">ID</div>
<div class="ab" style="left:703.50px;top:720.80px;width:350.00px;height:30.00px;border:1px solid #8c8f94;border-radius:4px;background:#f0f0f1"></div><div class="tx" style="left:713.20px;top:727.96px;font-size:13.4px;line-height:17px;color:#2c3338;font-weight:400;font-style:normal;">new-select-fields</div>
<div class="tx" style="left:702.70px;top:753.25px;font-size:12.55px;line-height:16px;color:#2c3338;font-weight:400;font-style:italic;">ID values cannot be changed after being set!</div>
<div class="tx" style="left:482.70px;top:807.30px;font-size:13.0px;line-height:17px;color:#2c3338;font-weight:400;font-style:normal;-webkit-text-stroke:0.36px #2c3338;">Field Type</div>
<div class="ab" style="left:703.50px;top:806.30px;width:350.00px;height:30.00px;border:1px solid #8c8f94;border-radius:4px;background:#fff"></div><div class="tx" style="left:713.20px;top:813.46px;font-size:13.4px;line-height:17px;color:#2c3338;font-weight:400;font-style:normal;">Select</div>
<svg class="ab" style="left:1033px;top:817.5px;width:13px;height:8px" viewBox="0 0 13 8"><path d="M1.2 1.2l5.3 5.2 5.3-5.2" stroke="#50575e" stroke-width="2" fill="none"/></svg>
<div class="tx" style="left:482.70px;top:873.28px;font-size:13.04px;line-height:17px;color:#2c3338;font-weight:400;font-style:normal;-webkit-text-stroke:0.36px #2c3338;">Show in Filter Sidebar</div>
<div class="ab" style="left:702.60px;top:875.60px;width:16.00px;height:16.00px;border:1px solid #8c8f94;border-radius:4px;background:#fff"></div>
<svg class="ab" style="left:702.6px;top:875.6px;width:16px;height:16px" viewBox="0 0 16 16"><path d="M2.6 7.6l3.6 3.6 6.6-7.4" stroke="#3582c4" stroke-width="2.6" fill="none"/></svg>
<div class="tx" style="left:727.30px;top:874.18px;font-size:14.5px;line-height:19px;color:#2c3338;font-weight:400;font-style:normal;">Enable to show</div>
<div class="tx" style="left:702.70px;top:894.23px;font-size:12.6px;line-height:16px;color:#2c3338;font-weight:400;font-style:italic;">Enable to show this field in the filter sidebar.</div>
<div class="tx" style="left:482.70px;top:948.74px;font-size:13.15px;line-height:17px;color:#2c3338;font-weight:400;font-style:normal;-webkit-text-stroke:0.36px #2c3338;">Filter Display Order</div>
<div class="ab" style="left:703.50px;top:947.90px;width:177.00px;height:29.20px;border:1px solid #8c8f94;border-radius:4px;background:#fff"></div>
<div class="tx" style="left:713.70px;top:954.86px;font-size:13.4px;line-height:17px;color:#2c3338;font-weight:400;font-style:normal;">2</div>
<div class="tx" style="left:702.80px;top:979.71px;font-size:12.66px;line-height:16px;color:#2c3338;font-weight:400;font-style:italic;">Set display order for this filter in the sidebar (lower numbers show first)</div>
<div class="tx" style="left:482.70px;top:1033.90px;font-size:13.0px;line-height:17px;color:#2c3338;font-weight:400;font-style:normal;-webkit-text-stroke:0.36px #2c3338;">Options Value</div>
<div class="tx" style="left:482.50px;top:1057.10px;font-size:13px;line-height:17px;color:#787c82;font-weight:400;font-style:normal;">Input each per line</div>
<div class="ab" style="left:702.80px;top:1033.30px;width:652.20px;height:105.20px;border:1px solid #8c8f94;border-radius:4px;background:#fff"></div>
<div class="tx" style="left:710.00px;top:1037.25px;font-size:14.0px;line-height:18px;color:#2c3338;font-weight:400;font-style:normal;">Option 1</div>
<div class="tx" style="left:710.00px;top:1057.25px;font-size:14.0px;line-height:18px;color:#2c3338;font-weight:400;font-style:normal;">Option 2</div>
<div class="tx" style="left:710.00px;top:1077.25px;font-size:14.0px;line-height:18px;color:#2c3338;font-weight:400;font-style:normal;">Option 3</div>
<svg class="ab" style="left:1346px;top:1129.3px;width:8px;height:8px" viewBox="0 0 8 8"><path d="M.8 7.2L7.2.8M4.4 7.2L7.2 4.4" stroke="#555" stroke-width=".9"/></svg>
<div class="ab" style="left:466.50px;top:1168.50px;width:904.50px;height:563.30px;border:1px solid #d5d5d5;background:#fcfcfc"></div>
<div class="ab" style="left:467.50px;top:1169.50px;width:902.50px;height:38.50px;background:#eef4f2"></div>
<div class="tx" style="left:482.80px;top:1180.28px;font-size:14.5px;line-height:19px;color:#00745a;font-weight:400;font-style:normal;-webkit-text-stroke:0.36px #00745a;">Additional Field</div>
<svg class="ab" style="left:1312px;top:1180.7px;width:16px;height:16px" viewBox="0 0 16 16"><circle cx="8" cy="8" r="8" fill="#333"/><path d="M4.1 4.1l7.8 7.8M11.9 4.1l-7.8 7.8" stroke="#fff" stroke-width="2.3"/></svg>
<svg class="ab" style="left:1347px;top:1184.5px;width:8px;height:6px" viewBox="0 0 8 6"><path d="M0 0h8L4 6z" fill="#000"/></svg>
<div class="ab" style="left:482.50px;top:1273.00px;width:872.50px;height:1.00px;background:#e6e6e6"></div>
<div class="ab" style="left:482.50px;top:1358.50px;width:872.50px;height:1.00px;background:#e6e6e6"></div>
<div class="ab" style="left:482.50px;top:1424.50px;width:872.50px;height:1.00px;background:#e6e6e6"></div>
<div class="ab" style="left:482.50px;top:1500.00px;width:872.50px;height:1.00px;background:#e6e6e6"></div>
<div class="ab" style="left:482.50px;top:1585.50px;width:872.50px;height:1.00px;background:#e6e6e6"></div>
<div class="tx" style="left:482.70px;top:1229.30px;font-size:13.0px;line-height:17px;color:#2c3338;font-weight:400;font-style:normal;-webkit-text-stroke:0.36px #2c3338;">Label</div>
<div class="ab" style="left:703.50px;top:1228.30px;width:350.00px;height:30.00px;border:1px solid #8c8f94;border-radius:4px;background:#fff"></div><div class="tx" style="left:713.20px;top:1235.46px;font-size:13.4px;line-height:17px;color:#2c3338;font-weight:400;font-style:normal;">New Checkbox Fields</div>
<div class="tx" style="left:482.70px;top:1295.30px;font-size:13.0px;line-height:17px;color:#2c3338;font-weight:400;font-style:normal;-webkit-text-stroke:0.36px #2c3338;">ID</div>
<div class="ab" style="left:703.50px;top:1294.30px;width:350.00px;height:30.00px;border:1px solid #8c8f94;border-radius:4px;background:#f0f0f1"></div><div class="tx" style="left:713.20px;top:1301.46px;font-size:13.4px;line-height:17px;color:#2c3338;font-weight:400;font-style:normal;">new-checkbox-fields</div>
<div class="tx" style="left:702.70px;top:1326.75px;font-size:12.55px;line-height:16px;color:#2c3338;font-weight:400;font-style:italic;">ID values cannot be changed after being set!</div>
<div class="tx" style="left:482.70px;top:1380.80px;font-size:13.0px;line-height:17px;color:#2c3338;font-weight:400;font-style:normal;-webkit-text-stroke:0.36px #2c3338;">Field Type</div>
<div class="ab" style="left:703.50px;top:1379.80px;width:350.00px;height:30.00px;border:1px solid #8c8f94;border-radius:4px;background:#fff"></div><div class="tx" style="left:713.20px;top:1386.96px;font-size:13.4px;line-height:17px;color:#2c3338;font-weight:400;font-style:normal;">Checkbox</div>
<svg class="ab" style="left:1033px;top:1391.0px;width:13px;height:8px" viewBox="0 0 13 8"><path d="M1.2 1.2l5.3 5.2 5.3-5.2" stroke="#50575e" stroke-width="2" fill="none"/></svg>
<div class="tx" style="left:482.70px;top:1446.78px;font-size:13.04px;line-height:17px;color:#2c3338;font-weight:400;font-style:normal;-webkit-text-stroke:0.36px #2c3338;">Show in Filter Sidebar</div>
<div class="ab" style="left:702.60px;top:1449.10px;width:16.00px;height:16.00px;border:1px solid #8c8f94;border-radius:4px;background:#fff"></div>
<svg class="ab" style="left:702.6px;top:1449.1px;width:16px;height:16px" viewBox="0 0 16 16"><path d="M2.6 7.6l3.6 3.6 6.6-7.4" stroke="#3582c4" stroke-width="2.6" fill="none"/></svg>
<div class="tx" style="left:727.30px;top:1447.68px;font-size:14.5px;line-height:19px;color:#2c3338;font-weight:400;font-style:normal;">Enable to show</div>
<div class="tx" style="left:702.70px;top:1467.73px;font-size:12.6px;line-height:16px;color:#2c3338;font-weight:400;font-style:italic;">Enable to show this field in the filter sidebar.</div>
<div class="tx" style="left:482.70px;top:1522.24px;font-size:13.15px;line-height:17px;color:#2c3338;font-weight:400;font-style:normal;-webkit-text-stroke:0.36px #2c3338;">Filter Display Order</div>
<div class="ab" style="left:703.50px;top:1521.40px;width:177.00px;height:29.20px;border:1px solid #8c8f94;border-radius:4px;background:#fff"></div>
<div class="tx" style="left:713.70px;top:1528.36px;font-size:13.4px;line-height:17px;color:#2c3338;font-weight:400;font-style:normal;">3</div>
<div class="tx" style="left:702.80px;top:1553.21px;font-size:12.66px;line-height:16px;color:#2c3338;font-weight:400;font-style:italic;">Set display order for this filter in the sidebar (lower numbers show first)</div>
<div class="tx" style="left:482.70px;top:1607.40px;font-size:13.0px;line-height:17px;color:#2c3338;font-weight:400;font-style:normal;-webkit-text-stroke:0.36px #2c3338;">Options Value</div>
<div class="tx" style="left:482.50px;top:1630.60px;font-size:13px;line-height:17px;color:#787c82;font-weight:400;font-style:normal;">Input each per line</div>
<div class="ab" style="left:702.80px;top:1606.80px;width:652.20px;height:105.20px;border:1px solid #8c8f94;border-radius:4px;background:#fff"></div>
<div class="tx" style="left:710.00px;top:1610.75px;font-size:14.0px;line-height:18px;color:#2c3338;font-weight:400;font-style:normal;">Checkbox 1</div>
<div class="tx" style="left:710.00px;top:1630.75px;font-size:14.0px;line-height:18px;color:#2c3338;font-weight:400;font-style:normal;">Checkbox 2</div>
<div class="tx" style="left:710.00px;top:1650.75px;font-size:14.0px;line-height:18px;color:#2c3338;font-weight:400;font-style:normal;">Checkbox 3</div>
<svg class="ab" style="left:1346px;top:1702.8px;width:8px;height:8px" viewBox="0 0 8 8"><path d="M.8 7.2L7.2.8M4.4 7.2L7.2 4.4" stroke="#555" stroke-width=".9"/></svg>
<div class="ab" style="left:466.60px;top:1741.60px;width:96.70px;height:32.20px;border:1px solid #2271b1;border-radius:3px;background:#f6f7f7"></div>
<div class="tx" style="left:466.6px;top:1741.6px;width:96.7px;text-align:center;font-size:13.9px;line-height:33.2px;color:#2271b1">+ Add more</div>
<div class="tx" style="left:180.30px;top:1952.17px;font-size:12.5px;line-height:16px;color:#50575e;font-weight:400;font-style:italic;">Thank you for creating with <span style="color:#2271b1;text-decoration:underline">WordPress</span>.</div>
<div class="tx" style="right:6.70px;top:1951.72px;font-size:12.05px;line-height:16px;color:#50575e;font-weight:400;font-style:normal;">Version 6.8.1</div>
</div></body></html>
